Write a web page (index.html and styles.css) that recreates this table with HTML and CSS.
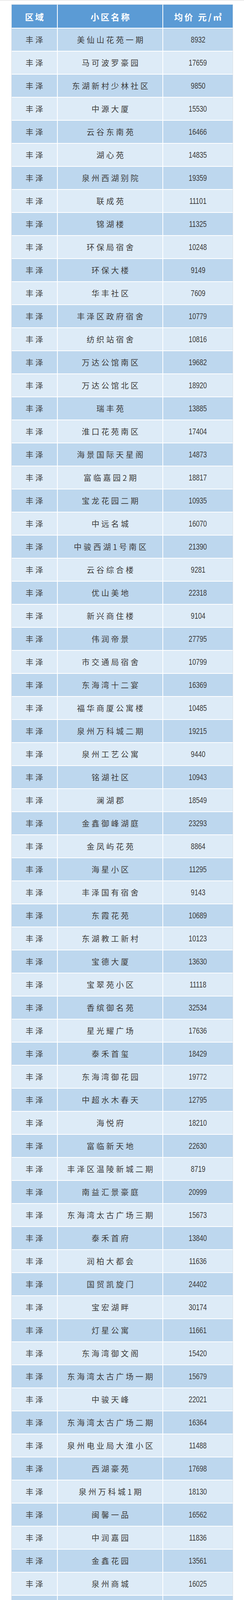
FILE: index.html
```html
<!DOCTYPE html>
<html lang="zh-CN">
<head>
<meta charset="utf-8">
<title>丰泽小区均价</title>
<link rel="stylesheet" href="styles.css">
</head>
<body>
<div class="topline"></div>
<div class="sheet">
  <div class="row head"><div class="c c1">区域</div><div class="c c2">小区名称</div><div class="c c3">均价 元/㎡</div></div>
  <div class="row odd"><div class="c c1">丰泽</div><div class="c c2">美仙山花苑一期</div><div class="c c3"><span class="n">8932</span></div></div>
  <div class="row even"><div class="c c1">丰泽</div><div class="c c2">马可波罗豪园</div><div class="c c3"><span class="n">17659</span></div></div>
  <div class="row odd"><div class="c c1">丰泽</div><div class="c c2">东湖新村少林社区</div><div class="c c3"><span class="n">9850</span></div></div>
  <div class="row even"><div class="c c1">丰泽</div><div class="c c2">中源大厦</div><div class="c c3"><span class="n">15530</span></div></div>
  <div class="row odd"><div class="c c1">丰泽</div><div class="c c2">云谷东南苑</div><div class="c c3"><span class="n">16466</span></div></div>
  <div class="row even"><div class="c c1">丰泽</div><div class="c c2">湖心苑</div><div class="c c3"><span class="n">14835</span></div></div>
  <div class="row odd"><div class="c c1">丰泽</div><div class="c c2">泉州西湖别院</div><div class="c c3"><span class="n">19359</span></div></div>
  <div class="row even"><div class="c c1">丰泽</div><div class="c c2">联成苑</div><div class="c c3"><span class="n">11101</span></div></div>
  <div class="row odd"><div class="c c1">丰泽</div><div class="c c2">锦湖楼</div><div class="c c3"><span class="n">11325</span></div></div>
  <div class="row even"><div class="c c1">丰泽</div><div class="c c2">环保局宿舍</div><div class="c c3"><span class="n">10248</span></div></div>
  <div class="row odd"><div class="c c1">丰泽</div><div class="c c2">环保大楼</div><div class="c c3"><span class="n">9149</span></div></div>
  <div class="row even"><div class="c c1">丰泽</div><div class="c c2">华丰社区</div><div class="c c3"><span class="n">7609</span></div></div>
  <div class="row odd"><div class="c c1">丰泽</div><div class="c c2">丰泽区政府宿舍</div><div class="c c3"><span class="n">10779</span></div></div>
  <div class="row even"><div class="c c1">丰泽</div><div class="c c2">纺织站宿舍</div><div class="c c3"><span class="n">10816</span></div></div>
  <div class="row odd"><div class="c c1">丰泽</div><div class="c c2">万达公馆南区</div><div class="c c3"><span class="n">19682</span></div></div>
  <div class="row even"><div class="c c1">丰泽</div><div class="c c2">万达公馆北区</div><div class="c c3"><span class="n">18920</span></div></div>
  <div class="row odd"><div class="c c1">丰泽</div><div class="c c2">瑞丰苑</div><div class="c c3"><span class="n">13885</span></div></div>
  <div class="row even"><div class="c c1">丰泽</div><div class="c c2">淮口花苑南区</div><div class="c c3"><span class="n">17404</span></div></div>
  <div class="row odd"><div class="c c1">丰泽</div><div class="c c2">海景国际天星阁</div><div class="c c3"><span class="n">14873</span></div></div>
  <div class="row even"><div class="c c1">丰泽</div><div class="c c2">富临嘉园2期</div><div class="c c3"><span class="n">18817</span></div></div>
  <div class="row odd"><div class="c c1">丰泽</div><div class="c c2">宝龙花园二期</div><div class="c c3"><span class="n">10935</span></div></div>
  <div class="row even"><div class="c c1">丰泽</div><div class="c c2">中远名城</div><div class="c c3"><span class="n">16070</span></div></div>
  <div class="row odd"><div class="c c1">丰泽</div><div class="c c2">中骏西湖1号南区</div><div class="c c3"><span class="n">21390</span></div></div>
  <div class="row even"><div class="c c1">丰泽</div><div class="c c2">云谷综合楼</div><div class="c c3"><span class="n">9281</span></div></div>
  <div class="row odd"><div class="c c1">丰泽</div><div class="c c2">优山美地</div><div class="c c3"><span class="n">22318</span></div></div>
  <div class="row even"><div class="c c1">丰泽</div><div class="c c2">新兴商住楼</div><div class="c c3"><span class="n">9104</span></div></div>
  <div class="row odd"><div class="c c1">丰泽</div><div class="c c2">伟润帝景</div><div class="c c3"><span class="n">27795</span></div></div>
  <div class="row even"><div class="c c1">丰泽</div><div class="c c2">市交通局宿舍</div><div class="c c3"><span class="n">10799</span></div></div>
  <div class="row odd"><div class="c c1">丰泽</div><div class="c c2">东海湾十二宴</div><div class="c c3"><span class="n">16369</span></div></div>
  <div class="row even"><div class="c c1">丰泽</div><div class="c c2">福华商厦公寓楼</div><div class="c c3"><span class="n">10485</span></div></div>
  <div class="row odd"><div class="c c1">丰泽</div><div class="c c2">泉州万科城二期</div><div class="c c3"><span class="n">19215</span></div></div>
  <div class="row even"><div class="c c1">丰泽</div><div class="c c2">泉州工艺公寓</div><div class="c c3"><span class="n">9440</span></div></div>
  <div class="row odd"><div class="c c1">丰泽</div><div class="c c2">铭湖社区</div><div class="c c3"><span class="n">10943</span></div></div>
  <div class="row even"><div class="c c1">丰泽</div><div class="c c2">澜湖郡</div><div class="c c3"><span class="n">18549</span></div></div>
  <div class="row odd"><div class="c c1">丰泽</div><div class="c c2">金鑫御峰湖庭</div><div class="c c3"><span class="n">23293</span></div></div>
  <div class="row even"><div class="c c1">丰泽</div><div class="c c2">金凤屿花苑</div><div class="c c3"><span class="n">8864</span></div></div>
  <div class="row odd"><div class="c c1">丰泽</div><div class="c c2">海星小区</div><div class="c c3"><span class="n">11295</span></div></div>
  <div class="row even"><div class="c c1">丰泽</div><div class="c c2">丰泽国有宿舍</div><div class="c c3"><span class="n">9143</span></div></div>
  <div class="row odd"><div class="c c1">丰泽</div><div class="c c2">东霞花苑</div><div class="c c3"><span class="n">10689</span></div></div>
  <div class="row even"><div class="c c1">丰泽</div><div class="c c2">东湖教工新村</div><div class="c c3"><span class="n">10123</span></div></div>
  <div class="row odd"><div class="c c1">丰泽</div><div class="c c2">宝德大厦</div><div class="c c3"><span class="n">13630</span></div></div>
  <div class="row even"><div class="c c1">丰泽</div><div class="c c2">宝翠苑小区</div><div class="c c3"><span class="n">11118</span></div></div>
  <div class="row odd"><div class="c c1">丰泽</div><div class="c c2">香缤御名苑</div><div class="c c3"><span class="n">32534</span></div></div>
  <div class="row even"><div class="c c1">丰泽</div><div class="c c2">星光耀广场</div><div class="c c3"><span class="n">17636</span></div></div>
  <div class="row odd"><div class="c c1">丰泽</div><div class="c c2">泰禾首玺</div><div class="c c3"><span class="n">18429</span></div></div>
  <div class="row even"><div class="c c1">丰泽</div><div class="c c2">东海湾御花园</div><div class="c c3"><span class="n">19772</span></div></div>
  <div class="row odd"><div class="c c1">丰泽</div><div class="c c2">中超水木春天</div><div class="c c3"><span class="n">12795</span></div></div>
  <div class="row even"><div class="c c1">丰泽</div><div class="c c2">海悦府</div><div class="c c3"><span class="n">18210</span></div></div>
  <div class="row odd"><div class="c c1">丰泽</div><div class="c c2">富临新天地</div><div class="c c3"><span class="n">22630</span></div></div>
  <div class="row even"><div class="c c1">丰泽</div><div class="c c2">丰泽区温陵新城二期</div><div class="c c3"><span class="n">8719</span></div></div>
  <div class="row odd"><div class="c c1">丰泽</div><div class="c c2">南益汇景豪庭</div><div class="c c3"><span class="n">20999</span></div></div>
  <div class="row even"><div class="c c1">丰泽</div><div class="c c2">东海湾太古广场三期</div><div class="c c3"><span class="n">15673</span></div></div>
  <div class="row odd"><div class="c c1">丰泽</div><div class="c c2">泰禾首府</div><div class="c c3"><span class="n">13840</span></div></div>
  <div class="row even"><div class="c c1">丰泽</div><div class="c c2">润柏大都会</div><div class="c c3"><span class="n">11636</span></div></div>
  <div class="row odd"><div class="c c1">丰泽</div><div class="c c2">国贸凯旋门</div><div class="c c3"><span class="n">24402</span></div></div>
  <div class="row even"><div class="c c1">丰泽</div><div class="c c2">宝宏湖畔</div><div class="c c3"><span class="n">30174</span></div></div>
  <div class="row odd"><div class="c c1">丰泽</div><div class="c c2">灯星公寓</div><div class="c c3"><span class="n">11661</span></div></div>
  <div class="row even"><div class="c c1">丰泽</div><div class="c c2">东海湾御文阁</div><div class="c c3"><span class="n">15420</span></div></div>
  <div class="row odd"><div class="c c1">丰泽</div><div class="c c2">东海湾太古广场一期</div><div class="c c3"><span class="n">15679</span></div></div>
  <div class="row even"><div class="c c1">丰泽</div><div class="c c2">中骏天峰</div><div class="c c3"><span class="n">22021</span></div></div>
  <div class="row odd"><div class="c c1">丰泽</div><div class="c c2">东海湾太古广场二期</div><div class="c c3"><span class="n">16364</span></div></div>
  <div class="row even"><div class="c c1">丰泽</div><div class="c c2">泉州电业局大淮小区</div><div class="c c3"><span class="n">11488</span></div></div>
  <div class="row odd"><div class="c c1">丰泽</div><div class="c c2">西湖豪苑</div><div class="c c3"><span class="n">17698</span></div></div>
  <div class="row even"><div class="c c1">丰泽</div><div class="c c2">泉州万科城1期</div><div class="c c3"><span class="n">18130</span></div></div>
  <div class="row odd"><div class="c c1">丰泽</div><div class="c c2">闽馨一品</div><div class="c c3"><span class="n">16562</span></div></div>
  <div class="row even"><div class="c c1">丰泽</div><div class="c c2">中润嘉园</div><div class="c c3"><span class="n">11836</span></div></div>
  <div class="row odd"><div class="c c1">丰泽</div><div class="c c2">金鑫花园</div><div class="c c3"><span class="n">13561</span></div></div>
  <div class="row even"><div class="c c1">丰泽</div><div class="c c2">泉州商城</div><div class="c c3"><span class="n">16025</span></div></div>
  <div class="row odd"><div class="c c1">丰泽</div><div class="c c2">中骏雍景台</div><div class="c c3"><span class="n">19077</span></div></div>
  <div class="row even"><div class="c c1">丰泽</div><div class="c c2">中骏柏景湾</div><div class="c c3"><span class="n">20417</span></div></div>
  <div class="row odd"><div class="c c1">丰泽</div><div class="c c2">宝成大厦</div><div class="c c3"><span class="n">13380</span></div></div>
  <div class="row even"><div class="c c1">丰泽</div><div class="c c2">中骏世界城</div><div class="c c3"><span class="n">9498</span></div></div>
  <div class="row odd"><div class="c c1">丰泽</div><div class="c c2">阳光巴黎二期</div><div class="c c3"><span class="n">12560</span></div></div>
  <div class="row even"><div class="c c1">丰泽</div><div class="c c2">城监宿舍</div><div class="c c3"><span class="n">10456</span></div></div>
  <div class="row odd"><div class="c c1">丰泽</div><div class="c c2">东星苑</div><div class="c c3"><span class="n">10666</span></div></div>
  <div class="row even"><div class="c c1">丰泽</div><div class="c c2">前坂公寓</div><div class="c c3"><span class="n">9868</span></div></div>
  <div class="row odd"><div class="c c1">丰泽</div><div class="c c2">刺桐明珠</div><div class="c c3"><span class="n">17222</span></div></div>
  <div class="row even"><div class="c c1">丰泽</div><div class="c c2">宝城华苑</div><div class="c c3"><span class="n">11020</span></div></div>
  <div class="row odd"><div class="c c1">丰泽</div><div class="c c2">明珠园</div><div class="c c3"><span class="n">17446</span></div></div>
  <div class="row even"><div class="c c1">丰泽</div><div class="c c2">富临华城二期</div><div class="c c3"><span class="n">25729</span></div></div>
  <div class="row odd"><div class="c c1">丰泽</div><div class="c c2">大铭新村邮电小区</div><div class="c c3"><span class="n">10283</span></div></div>
  <div class="row even"><div class="c c1">丰泽</div><div class="c c2">邮电局宿舍</div><div class="c c3"><span class="n">7840</span></div></div>
  <div class="row odd"><div class="c c1">丰泽</div><div class="c c2">桃源山庄</div><div class="c c3"><span class="n">36136</span></div></div>
  <div class="row even"><div class="c c1">丰泽</div><div class="c c2">滨海华庭</div><div class="c c3"><span class="n">12900</span></div></div>
  <div class="row odd"><div class="c c1">丰泽</div><div class="c c2">金鑫刺桐花苑</div><div class="c c3"><span class="n">12601</span></div></div>
  <div class="row even"><div class="c c1">丰泽</div><div class="c c2">毅达综合大楼</div><div class="c c3"><span class="n">11810</span></div></div>
  <div class="row odd"><div class="c c1">丰泽</div><div class="c c2">海城花苑</div><div class="c c3"><span class="n">11450</span></div></div>
  <div class="row even"><div class="c c1">丰泽</div><div class="c c2">鲤中湖心大厦</div><div class="c c3"><span class="n">9057</span></div></div>
  <div class="row odd"><div class="c c1">丰泽</div><div class="c c2">蔚蓝海岸</div><div class="c c3"><span class="n">16275</span></div></div>
  <div class="row even"><div class="c c1">丰泽</div><div class="c c2">沉洲花园</div><div class="c c3"><span class="n">13482</span></div></div>
  <div class="row odd"><div class="c c1">丰泽</div><div class="c c2">东莲花苑</div><div class="c c3"><span class="n">11899</span></div></div>
  <div class="row even"><div class="c c1">丰泽</div><div class="c c2">湖心铭典</div><div class="c c3"><span class="n">16607</span></div></div>
  <div class="row odd"><div class="c c1">丰泽</div><div class="c c2">后坂公寓</div><div class="c c3"><span class="n">9935</span></div></div>
  <div class="row even"><div class="c c1">丰泽</div><div class="c c2">学府上城</div><div class="c c3"><span class="n">13502</span></div></div>
  <div class="row odd"><div class="c c1">丰泽</div><div class="c c2">宝兴大厦</div><div class="c c3"><span class="n">10117</span></div></div>
  <div class="row even"><div class="c c1">丰泽</div><div class="c c2">富临嘉园1期</div><div class="c c3"><span class="n">18283</span></div></div>
  <div class="row odd"><div class="c c1">丰泽</div><div class="c c2">祥安居</div><div class="c c3"><span class="n">14369</span></div></div>
  <div class="row even"><div class="c c1">丰泽</div><div class="c c2">津淮大厦</div><div class="c c3"><span class="n">15974</span></div></div>
  <div class="row odd"><div class="c c1">丰泽</div><div class="c c2">田庵花苑</div><div class="c c3"><span class="n">16293</span></div></div>
  <div class="row even"><div class="c c1">丰泽</div><div class="c c2">浦西万达广场</div><div class="c c3"><span class="n">17684</span></div></div>
  <div class="row odd"><div class="c c1">丰泽</div><div class="c c2">水岸人家</div><div class="c c3"><span class="n">14242</span></div></div>
  <div class="row even"><div class="c c1">丰泽</div><div class="c c2">建材公寓</div><div class="c c3"><span class="n">10089</span></div></div>
  <div class="row odd"><div class="c c1">丰泽</div><div class="c c2">凯莱香壁</div><div class="c c3"><span class="n">16722</span></div></div>
  <div class="row even"><div class="c c1">丰泽</div><div class="c c2">汇源湖心花苑</div><div class="c c3"><span class="n">13100</span></div></div>
  <div class="row odd"><div class="c c1">丰泽</div><div class="c c2">尊邸大厦</div><div class="c c3"><span class="n">10972</span></div></div>
  <div class="row even"><div class="c c1">丰泽</div><div class="c c2">广鑫大厦</div><div class="c c3"><span class="n">14000</span></div></div>
  <div class="row odd"><div class="c c1">丰泽</div><div class="c c2">前坂新村东区</div><div class="c c3"><span class="n">10583</span></div></div>
  <div class="row even"><div class="c c1">丰泽</div><div class="c c2">鸿泉大厦</div><div class="c c3"><span class="n">11337</span></div></div>
</div>
</body>
</html>
```
FILE: styles.css
```css
html, body {
  margin: 0;
  padding: 0;
  background: #ffffff;
}

.topline {
  height: 2px;
  background: #ebebeb;
}

.sheet {
  margin: 9px 0 0 29px;
  width: 566px;
  border: 1px solid #dcdfe3;
  border-bottom: none;
  background: #ffffff;
  display: flex;
  flex-direction: column;
  gap: 2px;
}

.row {
  display: grid;
  grid-template-columns: 116px 268px 178px;
  column-gap: 2px;
  height: 57px;
}

.row.head {
  height: 59px;
}

.c {
  display: flex;
  align-items: center;
  justify-content: center;
  font-family: "Noto Sans CJK SC", "Noto Sans", sans-serif;
  font-size: 20px;
  color: #3d3d3d;
  letter-spacing: 5px;
  padding-left: 5px;
  white-space: nowrap;
}

.c3 {
  letter-spacing: 0;
  padding-left: 0;
}

.head .c {
  background: #5b9bd5;
  color: #ffffff;
  font-weight: bold;
  font-size: 22px;
  letter-spacing: 4px;
  padding-left: 4px;
}

.odd .c {
  background: #bdd7ee;
}

.even .c {
  background: #ddebf7;
}

.n {
  display: inline-block;
  font-family: "Liberation Sans", Arial, sans-serif;
  font-size: 22px;
  color: #3d3d3d;
  transform: scaleX(0.76);
  letter-spacing: 0;
}
```
